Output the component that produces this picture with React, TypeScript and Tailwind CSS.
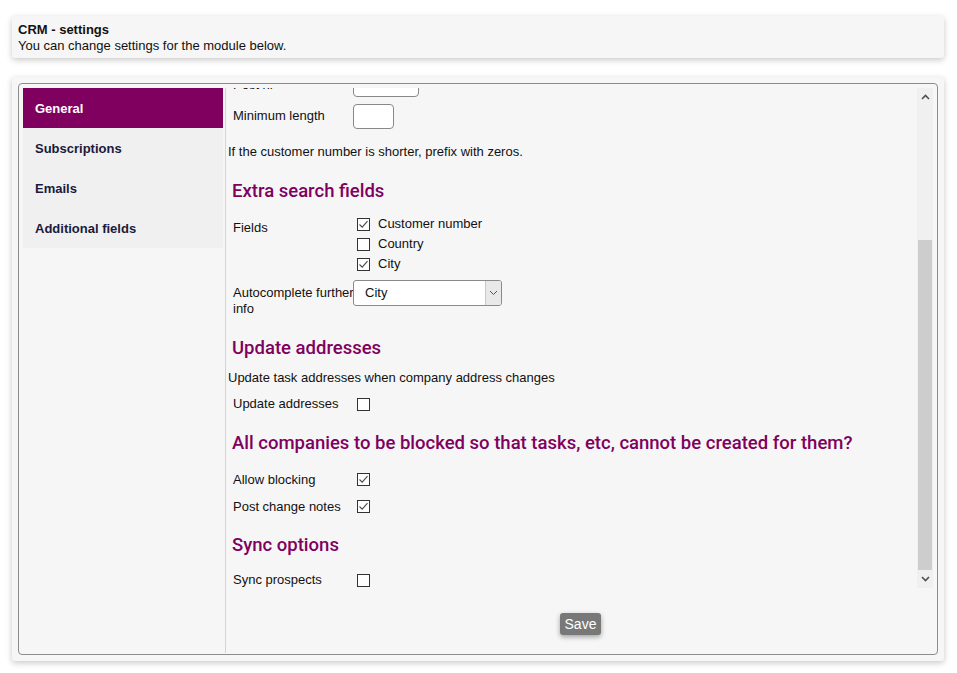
import React from "react";

const navItems = ["General", "Subscriptions", "Emails", "Additional fields"];

function Checkbox({ checked }: { checked?: boolean }) {
  return (
    <span className="ml-[4px] inline-flex h-[13px] w-[13px] shrink-0 items-center justify-center border border-[#333] bg-white">
      {checked && (
        <svg width="11" height="11" viewBox="0 0 11 11">
          <polyline
            points="1.5,5.5 4.2,8.2 9.5,2.2"
            fill="none"
            stroke="#4a4a4a"
            strokeWidth="1.1"
          />
        </svg>
      )}
    </span>
  );
}

function Heading({ children, className = "" }: { children: React.ReactNode; className?: string }) {
  return (
    <h2
      className={
        "pl-[4px] font-['Roboto',sans-serif] text-[18.5px] font-medium leading-[24px] text-[#80005f] " +
        className
      }
    >
      {children}
    </h2>
  );
}

function Row({
  label,
  children,
  className = "",
}: {
  label: string;
  children: React.ReactNode;
  className?: string;
}) {
  return (
    <div className={"flex items-center pl-[5px] " + className}>
      <div className="w-[120px] shrink-0">{label}</div>
      <div className="flex items-center">{children}</div>
    </div>
  );
}

export default function App() {
  return (
    <div className="min-h-screen bg-white pt-[16px] font-['Liberation_Sans',Arial,sans-serif] text-[13px] text-[#111]">
      <div className="ml-[12px] mr-[13px] rounded-[3px] bg-[#f6f6f6] px-[6px] pb-[4px] pt-[6px] shadow-[0_2px_6px_rgba(0,0,0,0.22)]">
        <div className="font-bold leading-[16px]">CRM - settings</div>
        <div className="leading-[16px]">You can change settings for the module below.</div>
      </div>

      <div className="ml-[12px] mr-[13px] mt-[19px] rounded-[3px] bg-[#f6f6f6] p-[6px] shadow-[0_2px_6px_rgba(0,0,0,0.22)]">
        <div className="flex h-[572px] rounded-[4px] border border-[#8c8c8c] p-[4px] pb-[1px] pr-[4px]">
          {/* sidebar */}
          <div className="w-[200px] shrink-0">
            {navItems.map((item, i) => (
              <div
                key={item}
                className={
                  "flex h-[40px] items-center pl-[12px] pt-[1px] font-bold " +
                  (i === 0 ? "bg-[#80005f] text-white" : "bg-[#f0f0f0] text-[#1a1a3c]")
                }
              >
                {item}
              </div>
            ))}
          </div>

          <div className="ml-[2px] flex flex-1 flex-col border-l border-[#d4d4d4]">
            <div className="flex h-[500px]">
              {/* scrolled content */}
              <div className="flex-1 overflow-hidden">
                <div className="-mt-[17px] pl-[2px] leading-[16px]">
                  <Row label="Post nr" className="h-[30px] pb-[2px]">
                    <div className="h-[24px] w-[66px] rounded-[4px] border border-[#888] bg-white" />
                  </Row>
                  <Row label="Minimum length" className="h-[30px]">
                    <div className="h-[25px] w-[41px] rounded-[4px] border border-[#888] bg-white" />
                  </Row>
                  <p className="mt-[13px]">If the customer number is shorter, prefix with zeros.</p>

                  <Heading className="mt-[19px]">Extra search fields</Heading>

                  <div className="mt-[11px] flex pl-[5px]">
                    <div className="w-[120px] shrink-0 pt-[6px]">Fields</div>
                    <div>
                      {[
                        ["Customer number", true],
                        ["Country", false],
                        ["City", true],
                      ].map(([name, on]) => (
                        <div key={name as string} className="flex h-[20px] items-center">
                          <Checkbox checked={on as boolean} />
                          <span className="ml-[8px]">{name as string}</span>
                        </div>
                      ))}
                    </div>
                  </div>

                  <div className="mt-[2px] flex pl-[5px]">
                    <div className="w-[120px] shrink-0 pt-[9px]">
                      <div className="w-[122px]">Autocomplete further info</div>
                    </div>
                    <div className="mt-[4px] flex h-[26px] w-[149px] overflow-hidden rounded-[3px] border border-[#8a8a8a] bg-white">
                      <div className="flex flex-1 items-center pl-[11px]">City</div>
                      <div className="flex w-[16px] items-center justify-center border-l border-[#c8c8c8] bg-[#e9e9e9]">
                        <svg width="9" height="6" viewBox="0 0 9 6">
                          <polyline points="1,1 4.5,4.5 8,1" fill="none" stroke="#555" strokeWidth="1" />
                        </svg>
                      </div>
                    </div>
                  </div>

                  <Heading className="mt-[19px]">Update addresses</Heading>
                  <p className="mt-[10px]">Update task addresses when company address changes</p>
                  <Row label="Update addresses" className="mt-[5px] h-[26px]">
                    <Checkbox />
                  </Row>

                  <Heading className="mt-[14px]">
                    All companies to be blocked so that tasks, etc, cannot be created for them?
                  </Heading>
                  <Row label="Allow blocking" className="mt-[11px] h-[27px]">
                    <Checkbox checked />
                  </Row>
                  <Row label="Post change notes" className="h-[27px]">
                    <Checkbox checked />
                  </Row>

                  <Heading className="mt-[13px]">Sync options</Heading>
                  <Row label="Sync prospects" className="mt-[10px] h-[26px]">
                    <Checkbox />
                  </Row>
                </div>
              </div>

              {/* scrollbar */}
              <div className="flex w-[16px] shrink-0 flex-col bg-[#f0f0f0]">
                <div className="flex h-[18px] items-center justify-center">
                  <svg width="9" height="6" viewBox="0 0 9 6">
                    <polyline points="1,5 4.5,1.5 8,5" fill="none" stroke="#505050" strokeWidth="1.6" />
                  </svg>
                </div>
                <div className="h-[134px]" />
                <div className="mx-[1px] h-[330px] bg-[#cdcdcd]" />
                <div className="flex h-[18px] items-center justify-center">
                  <svg width="9" height="6" viewBox="0 0 9 6">
                    <polyline points="1,1 4.5,4.5 8,1" fill="none" stroke="#505050" strokeWidth="1.6" />
                  </svg>
                </div>
              </div>
            </div>

            <div className="flex justify-center pt-[25px]">
              <button className="ml-[2px] h-[22px] rounded-[3px] bg-[#787878] px-[5px] text-[14px] leading-[22px] text-white shadow-[0_2px_5px_rgba(0,0,0,0.35)]">
                Save
              </button>
            </div>
          </div>
        </div>
      </div>
    </div>
  );
}
